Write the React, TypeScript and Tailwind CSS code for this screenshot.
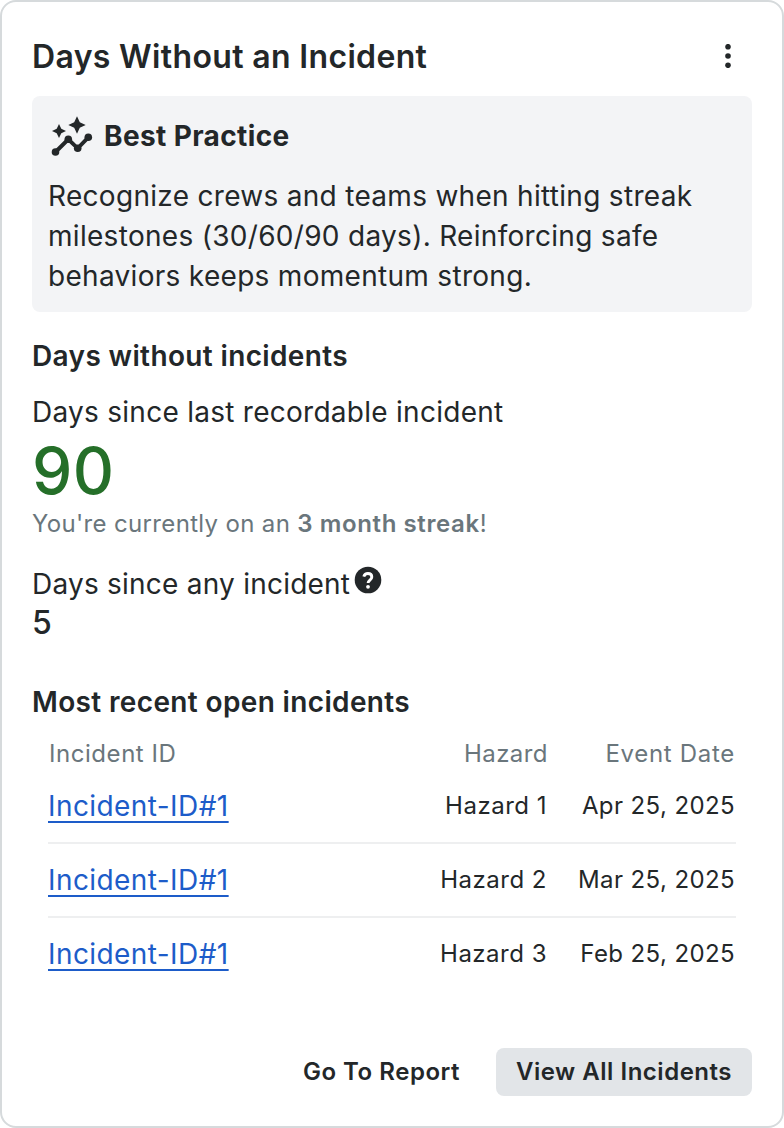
const incidents = [
  { hazard: 'Hazard 1', date: 'Apr 25, 2025' },
  { hazard: 'Hazard 2', date: 'Mar 25, 2025' },
  { hazard: 'Hazard 3', date: 'Feb 25, 2025' },
];

function InsightsIcon() {
  return (
    <svg viewBox="0 0 48 48" className="h-12 w-12 shrink-0" fill="currentColor">
      <path d="M7.5 40L20.3 27.3L29.7 36.3L40.3 25.3" fill="none" stroke="currentColor" strokeWidth="3.9" />
      <circle cx="7.5" cy="40" r="3.8" />
      <circle cx="20.3" cy="27.3" r="3.8" />
      <circle cx="29.7" cy="36.3" r="3.8" />
      <circle cx="40.3" cy="25.3" r="3.8" />
      <path d="M29 4.3l2.8 5.9 5.9 2.8-5.9 2.8-2.8 5.9-2.8-5.9-5.9-2.8 5.9-2.8z" />
      <path d="M11 12l2.3 4.7 4.7 2.3-4.7 2.3-2.3 4.7-2.3-4.7L4 19l4.7-2.3z" />
    </svg>
  );
}

export default function App() {
  return (
    <div className="h-[1128px] w-[784px] bg-white font-['Inter',sans-serif] text-[#232729]">
      <section className="flex h-full flex-col rounded-2xl border-2 border-[#d6dadc] px-[30px] pt-[30px] pb-[30px]">
        <header className="flex h-12 items-center justify-between">
          <h1 className="pt-0.5 text-[32px] leading-12 font-semibold tracking-[0.34px]">Days Without an Incident</h1>
          <button aria-label="More options" className="flex h-12 w-12 items-center justify-center">
            <svg viewBox="0 0 8 24" className="h-6 w-2" fill="currentColor">
              <circle cx="4" cy="2.7" r="2.8" />
              <circle cx="4" cy="12" r="2.8" />
              <circle cx="4" cy="21.3" r="2.8" />
            </svg>
          </button>
        </header>

        <div className="mt-4 h-[216px] rounded-lg bg-[#f3f4f6] px-4 pt-4">
          <div className="flex h-12 items-center gap-2">
            <InsightsIcon />
            <h2 className="text-[28px] font-bold tracking-[0.38px]">Best Practice</h2>
          </div>
          <p className="mt-4 text-[28px] leading-10 tracking-[0.3px]">
            Recognize crews and teams when hitting streak milestones (30/60/90 days). Reinforcing safe behaviors keeps momentum strong.
          </p>
        </div>

        <h2 className="mt-6 text-[28px] leading-10 font-semibold tracking-[0.36px]">Days without incidents</h2>
        <p className="mt-4 text-[28px] leading-10 tracking-[0.27px]">Days since last recordable incident</p>
        <p className="mt-[3px] text-[64px] leading-[72px] font-medium tracking-[0.5px] text-[#256f29]">90</p>
        <p className="mt-px text-[24px] leading-8 tracking-[0.34px] text-[#6a767c]">
          You're currently on an <strong className="font-semibold tracking-[0.6px]">3 month streak</strong>!
        </p>
        <div className="mt-6 flex h-10 items-start">
          <p className="text-[28px] leading-10 tracking-[0.23px]">Days since any incident</p>
          <svg viewBox="0 0 28 28" className="mt-0.5 ml-1 h-7 w-7">
            <circle cx="14" cy="14" r="13.3" fill="currentColor" />
            <path d="M9.8 10.6c.6-2 2-3.1 4.1-3.1 2.3 0 3.9 1.3 3.9 3.4 0 1.5-.8 2.3-1.9 3.2-1.2 1-1.8 1.6-1.8 3" fill="none" stroke="white" strokeWidth="2.9" />
            <circle cx="14" cy="20.8" r="1.9" fill="white" />
          </svg>
        </div>
        <p className="text-[32px] leading-[38px] font-medium">5</p>

        <h2 className="mt-10 text-[28px] leading-10 font-semibold tracking-[0.36px]">Most recent open incidents</h2>
        <table className="mx-4 mt-2 w-[688px] border-collapse text-[24px] leading-[30px] tracking-[0.45px]">
          <thead>
            <tr className="h-[39px] text-[#6a767c]">
              <th className="pt-[9px] pl-px text-left font-normal tracking-[0.55px]">Incident ID</th>
              <th className="pt-[9px] text-right font-normal">Hazard</th>
              <th className="w-[188px] pt-[9px] pr-px text-right font-normal tracking-[0.7px]">Event Date</th>
            </tr>
          </thead>
          <tbody>
            {incidents.map((incident) => (
              <tr key={incident.hazard} className="h-[74px] border-b-2 border-[#eeeff0] last:h-[73px] last:border-0">
                <td className="pt-0.5">
                  <a href="#" className="text-[28px] tracking-[0.42px] text-[#1d5cc9] underline decoration-2 underline-offset-[5px] [text-decoration-skip-ink:none]">
                    Incident-ID#1
                  </a>
                </td>
                <td className="pr-px text-right tracking-[0.5px]">{incident.hazard}</td>
                <td className="pr-px text-right tracking-[0.4px]">{incident.date}</td>
              </tr>
            ))}
          </tbody>
        </table>

        <footer className="mt-auto flex justify-end gap-4 text-[24px] font-semibold tracking-[0.52px]">
          <button className="h-12 px-5">Go To Report</button>
          <button className="h-12 w-64 rounded-lg bg-[#e2e5e8]">View All Incidents</button>
        </footer>
      </section>
    </div>
  );
}
